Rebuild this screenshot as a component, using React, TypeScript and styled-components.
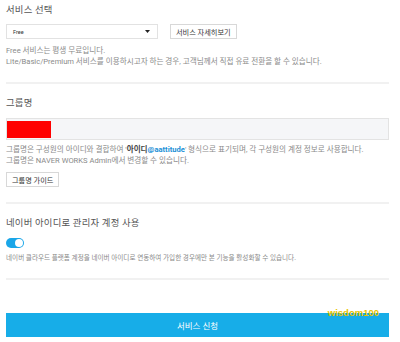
import React from "react";
import styled, { createGlobalStyle } from "styled-components";

const Global = createGlobalStyle`
  html, body { margin: 0; padding: 0; background: #fff; }
  body { font-family: Roboto, "Noto Sans CJK KR", sans-serif; }
`;

const Page = styled.div`
  width: 400px;
  padding: 4px 11px 0 6px;
  box-sizing: border-box;
`;

const Heading = styled.h2<{ $top?: number }>`
  margin: ${(p) => p.$top ?? 0}px 0 0;
  font-size: 9.4px;
  letter-spacing: 0.2px;
  line-height: 12px;
  font-weight: 400;
  color: #555;
`;

const Row = styled.div`
  display: flex;
  align-items: center;
  gap: 12px;
  margin-top: 8px;
`;

const SelectBox = styled.div`
  width: 152px;
  height: 15px;
  box-sizing: border-box;
  border: 1px solid #e2e2e2;
  background: #fff;
  display: flex;
  align-items: center;
  justify-content: space-between;
  padding: 0 7px 0 6px;
  font-size: 5.5px;
  color: #333;
`;

const GhostButton = styled.button<{ $top?: number }>`
  height: 15px;
  box-sizing: border-box;
  border: 1px solid #d8d8d8;
  background: #fff;
  padding: 0 5px;
  margin-top: ${(p) => p.$top ?? 0}px;
  font-family: inherit;
  font-size: 7.2px;
  color: #333;
  display: inline-flex;
  align-items: center;
  cursor: pointer;
`;

const Help = styled.p<{ $top: number; $size?: number; $lh?: number }>`
  margin: ${(p) => p.$top}px 0 0;
  font-size: ${(p) => p.$size ?? 7.6}px;
  line-height: ${(p) => p.$lh ?? 11}px;
  color: #8a8a8a;
  white-space: nowrap;
`;

const Strong = styled.b<{ $blue?: boolean }>`
  font-weight: 700;
  color: ${(p) => (p.$blue ? "#1b8fd6" : "#444")};
`;

const Divider = styled.hr<{ $top: number }>`
  margin: ${(p) => p.$top}px 0 0;
  border: 0;
  height: 2px;
  background: #f1f1f1;
`;

const Input = styled.div`
  margin-top: 9px;
  height: 22px;
  box-sizing: border-box;
  border: 1px solid #e3e3e3;
  background: #f5f6f8;
  padding: 2px 0 0 0;
`;

const Redact = styled.span`
  display: block;
  width: 44px;
  height: 17px;
  background: #ff0000;
`;

const Toggle = styled.div`
  margin-top: 9px;
  width: 18px;
  height: 10px;
  border-radius: 5px;
  background: #1aa6e8;
  display: flex;
  align-items: center;
  justify-content: flex-end;
  padding-right: 1px;
  box-sizing: border-box;
`;

const Knob = styled.span`
  width: 8px;
  height: 8px;
  border-radius: 50%;
  background: #fff;
`;

const SubmitWrap = styled.div`
  position: relative;
  margin-top: 33px;
`;

const Submit = styled.button`
  width: 100%;
  height: 24px;
  border: 0;
  background: #17ade8;
  color: #fff;
  font-family: inherit;
  font-size: 8.5px;
  cursor: pointer;
`;

const Watermark = styled.span`
  position: absolute;
  right: 10px;
  top: -6px;
  font-family: "Liberation Sans", Arial, sans-serif;
  font-weight: 700;
  font-size: 9.5px;
  color: #e8c400;
`;

export default function App() {
  return (
    <>
      <Global />
      <Page>
        <Heading>서비스 선택</Heading>
        <Row>
          <SelectBox>
            <span>Free</span>
            <svg width="5" height="3" viewBox="0 0 5 3">
              <path d="M0 0h5L2.5 3z" fill="#222" />
            </svg>
          </SelectBox>
          <GhostButton>서비스 자세히보기</GhostButton>
        </Row>
        <Help $top={6}>
          Free 서비스는 평생 무료입니다.
          <br />
          Lite/Basic/Premium 서비스를 이용하시고자 하는 경우, 고객님께서 직접 유료 전환을 할 수 있습니다.
        </Help>
        <Divider $top={15} />

        <Heading $top={13}>그룹명</Heading>
        <Input>
          <Redact />
        </Input>
        <Help $top={4}>
          그룹명은 구성원의 아이디와 결합하여 '<Strong>아이디</Strong>
          <Strong $blue>@aattitude</Strong>' 형식으로 표기되며, 각 구성원의 계정 정보로 사용합니다.
          <br />
          그룹명은 NAVER WORKS Admin에서 변경할 수 있습니다.
        </Help>
        <GhostButton $top={6}>그룹명 가이드</GhostButton>
        <Divider $top={15} />

        <Heading $top={13}>네이버 아이디로 관리자 계정 사용</Heading>
        <Toggle>
          <Knob />
        </Toggle>
        <Help $top={5} $size={6.6} $lh={10}>
          네이버 클라우드 플랫폼 계정을 네이버 아이디로 연동하여 가입한 경우에만 본 기능을 활성화할 수 있습니다.
        </Help>
        <Divider $top={15} />

        <SubmitWrap>
          <Submit>서비스 신청</Submit>
          <Watermark>wisdom100</Watermark>
        </SubmitWrap>
      </Page>
    </>
  );
}
